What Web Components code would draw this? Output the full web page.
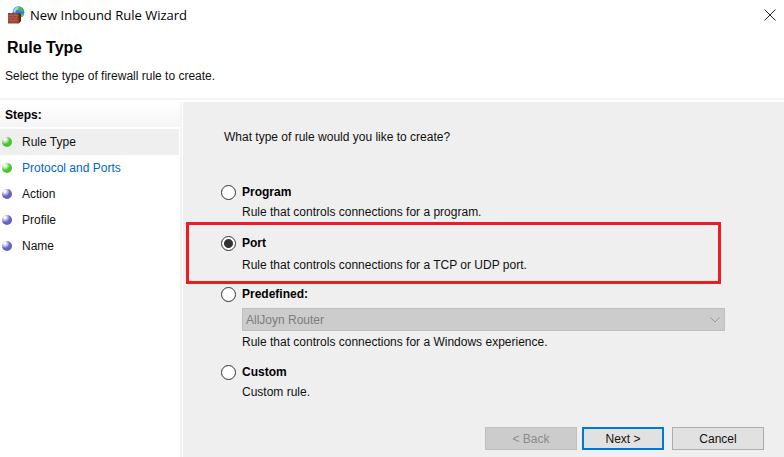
<!DOCTYPE html>
<html lang="en">
<head>
<meta charset="utf-8">
<title>New Inbound Rule Wizard</title>
<style>
  html, body { height: 100%; }
  body {
    margin: 0;
    background: #fff;
    color: #111;
    font: 12px/20px "Liberation Sans", Arial, sans-serif;
  }
</style>
</head>
<body>
<wizard-window>
  <wizard-titlebar slot="titlebar">New Inbound Rule Wizard</wizard-titlebar>
  <wizard-header slot="header" heading="Rule Type">Select the type of firewall rule to create.</wizard-header>
  <wizard-steps slot="steps">
    <wizard-step state="current">Rule Type</wizard-step>
    <wizard-step state="next">Protocol and Ports</wizard-step>
    <wizard-step>Action</wizard-step>
    <wizard-step>Profile</wizard-step>
    <wizard-step>Name</wizard-step>
  </wizard-steps>
  <rule-options question="What type of rule would you like to create?">
    <rule-option label="Program">Rule that controls connections for a program.</rule-option>
    <rule-option label="Port" checked highlighted>Rule that controls connections for a TCP or UDP port.</rule-option>
    <rule-option label="Predefined:">
      <rule-select slot="control" value="AllJoyn Router"></rule-select>
      Rule that controls connections for a Windows experience.
    </rule-option>
    <rule-option label="Custom">Custom rule.</rule-option>
  </rule-options>
  <wizard-actions slot="actions"></wizard-actions>
</wizard-window>

<script>
class WizardWindow extends HTMLElement {
  constructor() {
    super();
    this.attachShadow({ mode: 'open' });
  }

  connectedCallback() {
    this.shadowRoot.innerHTML = /* html */ `
    <style>
      :host {
        display: flex;
        flex-direction: column;
        min-height: 100%;
      }
      .body {
        display: grid;
        grid-template-columns: 182px 1fr;
        flex: 1;
        border-top: 2px solid #f4f4f4;
        padding-top: 2px;
      }
      .side { border-right: 2px solid #f4f4f4; }
      .page {
        min-width: 0;
        border-left: 1px solid #fff;
        background: #efefef;
      }
    </style>
    <slot name="titlebar"></slot>
    <slot name="header"></slot>
    <div class="body">
      <aside class="side"><slot name="steps"></slot></aside>
      <main class="page"><slot></slot><slot name="actions"></slot></main>
    </div>`;
  }
}

class WizardTitlebar extends HTMLElement {
  constructor() {
    super();
    this.attachShadow({ mode: 'open' });
  }

  connectedCallback() {
    this.shadowRoot.innerHTML = /* html */ `
    <style>
      :host {
        display: flex;
        align-items: center;
        height: 30px;
        padding: 0 8px 0 7px;
        font: 13px/20px "Open Sans", "Noto Sans", sans-serif;
        color: #000;
      }
      .icon { width: 18px; height: 18px; margin-right: 5px; }
      .title { flex: 1; }
      button {
        display: flex;
        padding: 0;
        border: 0;
        background: none;
      }
    </style>
    <svg class="icon" viewBox="0 0 18 18" aria-hidden="true">
      <circle cx="11.5" cy="6.2" r="5.9" fill="#2f82d0"/>
      <path d="M6 5Q8 .8 12 .8L11.500 3 9 4.500 8 7Z" fill="#9fd6ee"/>
      <path d="M12 .8Q16 1.500 16.800 5L15 6 13.500 4.500 11.500 5.500 11 3Z" fill="#53b84d"/>
      <path d="M14 8L17 7.500Q16.500 10.500 14 11.500Z" fill="#63c34d"/>
      <path d="M1 7H11.500L14 8V15L11.500 17.500H1Z" fill="#994433"/>
      <path d="M11.500 7L14 8V15L11.500 17.500Z" fill="#62291f"/>
      <path d="M1 9.500H11.500M1 12H11.500M1 14.500H11.500M4 7V9.500M8 7V9.500M2.500 9.500V12M6 9.500V12M9.500 9.500V12M4 12V14.500M8 12V14.500M6 14.500V17" stroke="#c57a62" stroke-width=".4"/>
    </svg>
    <span class="title"><slot></slot></span>
    <button type="button" aria-label="Close">
      <svg width="12" height="12" viewBox="0 0 12 12"><path d="M.5.500L11.500 11.500M11.500.500L.5 11.500" stroke="#222"/></svg>
    </button>`;
  }
}

class WizardHeader extends HTMLElement {
  constructor() {
    super();
    this.attachShadow({ mode: 'open' });
  }

  connectedCallback() {
    this.shadowRoot.innerHTML = /* html */ `
    <style>
      :host { display: block; padding: 8px 5px 12px; }
      h1 { margin: 0 2px 8px; font-size: 16px; line-height: 20px; color: #000; }
      p { margin: 0; }
    </style>
    <h1>${this.getAttribute('heading')}</h1>
    <p><slot></slot></p>`;
  }
}

class WizardSteps extends HTMLElement {
  constructor() {
    super();
    this.attachShadow({ mode: 'open' });
  }

  connectedCallback() {
    this.shadowRoot.innerHTML = /* html */ `
    <style>
      :host { display: block; }
      h2 {
        margin: 0 0 2px;
        padding: 3px 5px 2px;
        font-size: 12px;
        line-height: 20px;
        color: #000;
        background: linear-gradient(#fff, #f5f5f5);
      }
    </style>
    <h2>Steps:</h2>
    <nav><slot></slot></nav>`;
  }
}

class WizardStep extends HTMLElement {
  constructor() {
    super();
    this.attachShadow({ mode: 'open' });
  }

  connectedCallback() {
    const state = this.getAttribute('state');
    const text = state === 'next' ? '<a href="#ports"><slot></slot></a>' : '<span><slot></slot></span>';
    this.shadowRoot.innerHTML = /* html */ `
    <style>
      :host {
        --dot: #6560c8;
        display: flex;
        align-items: center;
        gap: 10px;
        height: 26px;
        margin-right: 1px;
        padding-left: 2px;
      }
      :host([state]) { --dot: #48c52e; }
      :host([state="current"]) { background: #efefef; }
      .dot {
        width: 10px;
        height: 10px;
        border-radius: 50%;
        background: radial-gradient(circle at 30% 25%, #fff 8%, transparent 48%), var(--dot);
      }
      a { color: #0066cc; text-decoration: none; }
    </style>
    <i class="dot"></i>
    ${text}`;
  }
}

class RuleOptions extends HTMLElement {
  constructor() {
    super();
    this.attachShadow({ mode: 'open' });
  }

  connectedCallback() {
    this.shadowRoot.innerHTML = /* html */ `
    <style>
      :host { display: block; padding-top: 25px; }
      p { margin: 0 41px 35px; }
    </style>
    <p id="question">${this.getAttribute('question')}</p>
    <div role="radiogroup" aria-labelledby="question"><slot></slot></div>`;

    // radios in separate shadow roots are not grouped by name
    this.addEventListener('option-picked', (e) => {
      this.querySelectorAll('rule-option').forEach((option) => {
        if (option !== e.target) option.uncheck();
      });
    });
  }
}

class RuleOption extends HTMLElement {
  constructor() {
    super();
    this.attachShadow({ mode: 'open' });
  }

  static get styles() {
    return /* css */`
    :host {
      display: block;
      margin: 0 59px 10px 38px;
    }
    :host([highlighted]) {
      margin: 0 63px 0 3px;
      padding: 8px 0 6px 32px;
      border: 3px solid #ed1c24;
    }
    :host(:first-child) { margin-bottom: 0; }
    .row {
      display: flex;
      align-items: center;
      gap: 6px;
    }
    label { font-weight: bold; color: #000; }
    input {
      appearance: none;
      box-sizing: border-box;
      width: 15px;
      height: 15px;
      margin: 0;
      border: 1px solid #333;
      border-radius: 50%;
      background: #fff;
    }
    input:checked {
      background: radial-gradient(circle, #333 0 4px, #fff 5px);
    }
    .text { padding-left: 21px; }
    :host([highlighted]) .text { padding-top: 2px; }
    `;
  }

  connectedCallback() {
    const checked = this.hasAttribute('checked') ? 'checked' : '';
    this.shadowRoot.innerHTML = /* html */ `
    <style>${RuleOption.styles}</style>
    <div class="row">
      <input type="radio" id="radio" ${checked}>
      <label for="radio">${this.getAttribute('label')}</label>
    </div>
    <div class="text">
      <slot name="control"></slot>
      <slot></slot>
    </div>`;
    this.radio = this.shadowRoot.querySelector('input');
    this.radio.addEventListener('change', () => {
      this.dispatchEvent(new CustomEvent('option-picked', { bubbles: true }));
    });
  }

  uncheck() {
    this.radio.checked = false;
  }
}

class RuleSelect extends HTMLElement {
  constructor() {
    super();
    this.attachShadow({ mode: 'open' });
  }

  connectedCallback() {
    this.shadowRoot.innerHTML = /* html */ `
    <style>
      :host { display: grid; padding: 4px 0 1px; }
      select, svg { grid-area: 1 / 1; }
      select {
        appearance: none;
        width: 100%;
        height: 23px;
        padding: 0 3px;
        border: 1px solid #bfbfbf;
        border-radius: 0;
        background: #ccc;
        color: #7c7c7c;
        font: inherit;
        opacity: 1;
      }
      svg { place-self: center end; margin-right: 5px; pointer-events: none; }
    </style>
    <select aria-label="Predefined" disabled>
      <option>${this.getAttribute('value')}</option>
    </select>
    <svg width="10" height="6" viewBox="0 0 10 6"><path d="M.5.500L5 5 9.500.500" fill="none" stroke="#999"/></svg>`;
  }
}

class WizardActions extends HTMLElement {
  constructor() {
    super();
    this.attachShadow({ mode: 'open' });
  }

  connectedCallback() {
    this.shadowRoot.innerHTML = /* html */ `
    <style>
      :host {
        display: flex;
        justify-content: flex-end;
        padding: 15px 20px 7px;
      }
      button {
        box-sizing: border-box;
        width: 92px;
        height: 23px;
        padding: 0;
        border: 1px solid #adadad;
        background: #e1e1e1;
        color: #111;
        font: inherit;
      }
      .back { margin-right: 5px; }
      .back:disabled { border-color: #bfbfbf; background: #ccc; color: #8a8a8a; }
      .next { width: 82px; margin-right: 8px; border: 2px solid #0078d7; }
    </style>
    <button type="button" class="back" disabled>&lt; Back</button>
    <button type="button" class="next">Next &gt;</button>
    <button type="button">Cancel</button>`;
  }
}

customElements.define('wizard-window', WizardWindow);
customElements.define('wizard-titlebar', WizardTitlebar);
customElements.define('wizard-header', WizardHeader);
customElements.define('wizard-steps', WizardSteps);
customElements.define('wizard-step', WizardStep);
customElements.define('rule-options', RuleOptions);
customElements.define('rule-option', RuleOption);
customElements.define('rule-select', RuleSelect);
customElements.define('wizard-actions', WizardActions);
</script>
</body>
</html>
